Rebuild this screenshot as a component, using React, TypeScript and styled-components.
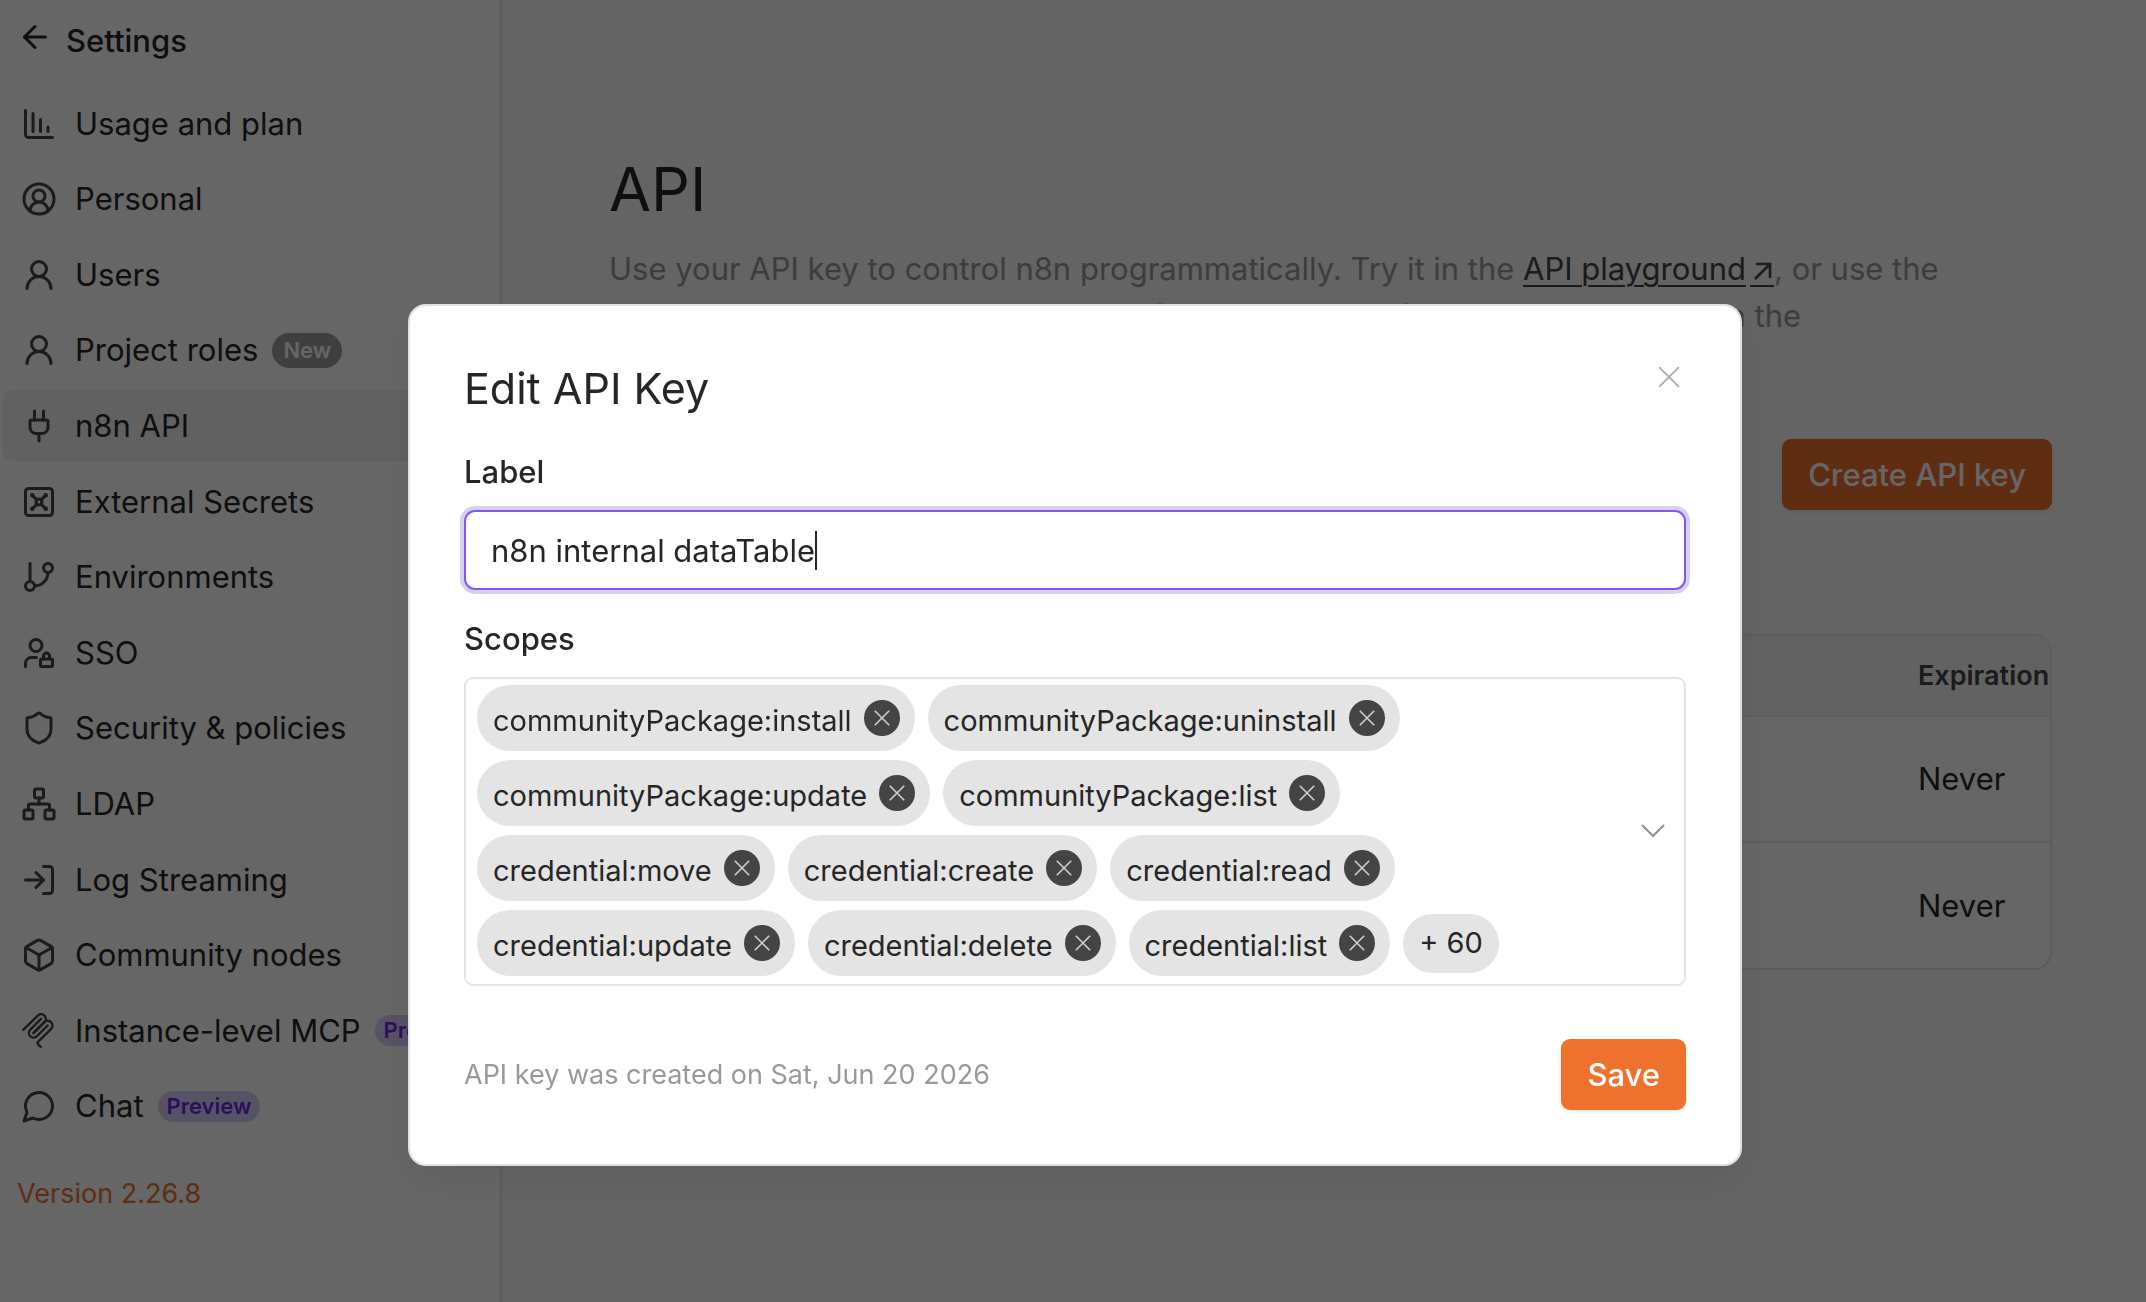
import React, { useLayoutEffect, useRef, useState } from 'react';
import styled, { createGlobalStyle, css } from 'styled-components';
import {
  ArrowLeft,
  Box,
  ChartColumnDecreasing,
  CircleUserRound,
  GitBranch,
  LogIn,
  Network,
  Plug,
  Shield,
  UserLock,
  UserRound,
  Vault,
} from 'lucide-react';

const GlobalStyle = createGlobalStyle`
  *, *::before, *::after { box-sizing: border-box; }
  body {
    margin: 0;
    font-family: Inter, "Liberation Sans", sans-serif;
    font-size: 31px;
    line-height: 40px;
    color: #262626;
    background: #fafafa;
  }
  button, input { font: inherit; color: inherit; }
`;

const Page = styled.div`
  display: flex;
  min-height: 100vh;
`;

const Sidebar = styled.aside`
  flex: none;
  width: 502px;
  min-height: 100vh;
  display: flex;
  flex-direction: column;
  padding-bottom: 88px;
  background: #fff;
  border-right: 2px solid #e3e3e3;
`;

const BackButton = styled.button`
  display: flex;
  gap: 13px;
  align-items: flex-start;
  margin: 0;
  padding: 19px 17px 25px;
  border: 0;
  background: none;
  font-weight: 500;
  line-height: 44px;
  text-align: left;
  cursor: pointer;
`;

const NavList = styled.ul`
  flex: 1;
  display: flex;
  flex-direction: column;
  justify-content: space-between;
  margin: 0;
  padding: 0 3px;
  list-style: none;
`;

const NavLink = styled.a<{ $active?: boolean }>`
  display: flex;
  align-items: center;
  height: 71px;
  padding: 0 18px;
  border-radius: 9px;
  color: inherit;
  text-decoration: none;
  white-space: nowrap;
  ${(p) => p.$active && css`background: #f3f3f3;`}
  svg { flex: none; margin-right: 18px; color: #444; }
`;

const Badge = styled.span<{ $tone: 'new' | 'preview' }>`
  margin-left: 14px;
  padding: 0 ${(p) => (p.$tone === 'new' ? 11 : 9)}px;
  border-radius: 18px;
  font-size: 22px;
  font-weight: 600;
  line-height: ${(p) => (p.$tone === 'new' ? 35 : 31)}px;
  color: ${(p) => (p.$tone === 'new' ? '#fff' : '#6f28e4')};
  background: ${(p) => (p.$tone === 'new' ? '#9d9d9d' : '#d8cffa')};
`;

const Version = styled.a`
  padding: 32px 17px 0;
  font-size: 27px;
  line-height: 40px;
  color: #ee722d;
  text-decoration: none;
`;

const Main = styled.main`
  flex: 1;
  min-width: 0;
  padding: 147px 94px 0 107px;
`;

const PageTitle = styled.h1`
  margin: 0;
  font-size: 61px;
  font-weight: 400;
  line-height: 84px;
`;

const Description = styled.p`
  margin: 14px 0 0;
  line-height: 47px;
  color: #999;
`;

const TextLink = styled.a`
  color: #444;
  white-space: nowrap;
  text-decoration: underline;
  text-decoration-thickness: 2px;
  text-underline-offset: 5px;
  svg { margin-left: 4px; vertical-align: -7px; border-bottom: 2px solid #444; }
`;

const Actions = styled.div`
  display: flex;
  justify-content: flex-end;
  margin-top: 53px;
`;

const PrimaryButton = styled.button`
  height: 71px;
  padding: 0 26px;
  border: 0;
  border-radius: 9px;
  font-weight: 500;
  color: #fff;
  background: #ee722d;
  box-shadow: 0 2px 4px rgba(0, 0, 0, 0.08);
  cursor: pointer;
`;

const TableFrame = styled.div`
  margin-top: 124px;
  border: 2px solid #e6e6e6;
  border-radius: 18px;
  overflow: hidden;
  background: #fff;
`;

const KeysTable = styled.table`
  width: 100%;
  border-collapse: collapse;
  table-layout: fixed;
  th, td { padding: 0 0 0 18px; text-align: left; white-space: nowrap; }
  th {
    height: 80px;
    font-size: 27px;
    font-weight: 600;
    color: #444;
    background: #f6f6f6;
    border-bottom: 1px solid #e6e6e6;
  }
  th:last-child { width: 150px; }
  td { height: 126px; }
  tbody tr + tr td { border-top: 2px solid #e6e6e6; }
`;

const Overlay = styled.div`
  position: fixed;
  inset: 0;
  display: flex;
  justify-content: center;
  align-items: flex-start;
  padding: 304px 0 0 4px;
  background: rgba(0, 0, 0, 0.6);
`;

const Modal = styled.section`
  width: 1334px;
  max-width: 100%;
  padding: 54px;
  border: 2px solid #e0e0e0;
  border-radius: 18px;
  background: #fff;
  box-shadow: 0 14px 40px rgba(0, 0, 0, 0.08);
`;

const ModalHeader = styled.header`
  display: flex;
  justify-content: space-between;
  align-items: flex-start;
`;

const ModalTitle = styled.h2`
  margin: 0;
  font-size: 43px;
  font-weight: 400;
  line-height: 56px;
`;

const CloseButton = styled.button`
  display: grid;
  place-items: center;
  width: 34px;
  height: 34px;
  padding: 0;
  border: 0;
  background: none;
  color: #adadad;
  cursor: pointer;
`;

const FieldLabel = styled.label<{ $gap: number }>`
  display: block;
  margin-top: ${(p) => p.$gap}px;
  font-weight: 500;
`;

const InputWrap = styled.div`
  position: relative;
  margin-top: 18px;
`;

const TextInput = styled.input`
  display: block;
  width: 100%;
  height: 80px;
  padding: 0 25px;
  border: 2px solid #8457f3;
  border-radius: 11px;
  outline: 0;
  box-shadow: 0 0 0 4px #d5d1ee;
  background: #fff;
  caret-color: transparent;
`;

const Caret = styled.span`
  position: absolute;
  top: 21px;
  width: 2px;
  height: 39px;
  background: #262626;
  pointer-events: none;
`;

const ScopeSelect = styled.div`
  display: flex;
  align-items: center;
  margin-top: 18px;
  padding: 6px 17px 8px 11px;
  border: 2px solid #e4e4e4;
  border-radius: 9px;
`;

const Chips = styled.ul`
  flex: 1;
  display: flex;
  flex-wrap: wrap;
  align-items: center;
  gap: 9px 13px;
  margin: 0;
  padding: 0 90px 0 0;
  list-style: none;
`;

const Chip = styled.li`
  display: flex;
  align-items: center;
  gap: 12px;
  height: 66px;
  padding: 0 15px 0 16px;
  border-radius: 33px;
  font-size: 29px;
  background: #e4e4e4;
  span { padding-top: 6px; }
`;

const MoreChip = styled(Chip)`
  height: 59px;
  padding: 0 16px;
`;

const RemoveButton = styled.button`
  display: grid;
  place-items: center;
  width: 36px;
  height: 36px;
  padding: 0;
  border: 0;
  border-radius: 50%;
  background: #444;
  color: #d0d0d0;
  cursor: pointer;
`;

const ToggleButton = styled(CloseButton)`
  width: 28px;
  color: #8f8f8f;
`;

const ModalFooter = styled.footer`
  display: flex;
  justify-content: space-between;
  align-items: center;
  margin-top: 53px;
`;

const CreatedNote = styled.span`
  font-size: 27px;
  color: #999;
`;

const McpIcon = () => (
  <svg width="36" height="36" viewBox="0 0 24 24" fill="none" stroke="currentColor" strokeWidth="1.6" strokeLinecap="round" strokeLinejoin="round">
    <path d="M1.5 11.3 11.2 1.7a3.1 3.1 0 0 1 4.4 4.4L8.3 13.4" />
    <path d="m8.4 13.3 7.2-7.2a3.1 3.1 0 0 1 4.4 0l.1.1a3.1 3.1 0 0 1 0 4.4l-8.8 8.7a1 1 0 0 0 0 1.5l1.8 1.8" />
    <path d="m13.4 3.9-7.2 7.2a3.1 3.1 0 0 0 4.4 4.4l7.2-7.2" />
  </svg>
);

const ChatIcon = () => (
  <svg width="36" height="36" viewBox="0 0 24 24" fill="none" stroke="currentColor" strokeWidth="2" strokeLinecap="round" strokeLinejoin="round">
    <path d="M7.9 20A9 9 0 1 0 4 16.1L2 22Z" />
  </svg>
);

const ExternalArrow = () => (
  <svg width="24" height="28" viewBox="0 0 24 26" fill="none" stroke="currentColor" strokeWidth="2.6">
    <path d="M5 20 20 5M6 5h14v14" />
  </svg>
);

const Cross = ({ size }: { size: number }) => (
  <svg width={size} height={size} viewBox="0 0 20 20" fill="none" stroke="currentColor" strokeWidth={size > 20 ? 1.7 : 2}>
    <path d="m1 1 18 18M19 1 1 19" />
  </svg>
);

const LabelInput = ({ id, initial }: { id: string; initial: string }) => {
  const input = useRef<HTMLInputElement>(null);
  const [value, setValue] = useState(initial);
  const [caretLeft, setCaretLeft] = useState(0);

  useLayoutEffect(() => {
    const context = document.createElement('canvas').getContext('2d');
    if (!input.current || !context) return;
    const style = getComputedStyle(input.current);
    context.font = `${style.fontWeight} ${style.fontSize} ${style.fontFamily}`;
    const start = parseFloat(style.paddingLeft) + parseFloat(style.borderLeftWidth);
    setCaretLeft(Math.round(start + context.measureText(value).width));
  }, [value]);

  return (
    <InputWrap>
      <TextInput id={id} ref={input} type="text" value={value} onChange={(e) => setValue(e.target.value)} autoFocus />
      <Caret style={{ left: caretLeft }} />
    </InputWrap>
  );
};

const navItems = [
  { label: 'Usage and plan', icon: <ChartColumnDecreasing size={36} /> },
  { label: 'Personal', icon: <CircleUserRound size={36} /> },
  { label: 'Users', icon: <UserRound size={36} /> },
  { label: 'Project roles', icon: <UserRound size={36} />, badge: 'New' },
  { label: 'n8n API', icon: <Plug size={36} />, active: true },
  { label: 'External Secrets', icon: <Vault size={36} /> },
  { label: 'Environments', icon: <GitBranch size={36} /> },
  { label: 'SSO', icon: <UserLock size={36} /> },
  { label: 'Security & policies', icon: <Shield size={36} /> },
  { label: 'LDAP', icon: <Network size={36} /> },
  { label: 'Log Streaming', icon: <LogIn size={36} /> },
  { label: 'Community nodes', icon: <Box size={36} /> },
  { label: 'Instance-level MCP', icon: <McpIcon />, badge: 'Preview' },
  { label: 'Chat', icon: <ChatIcon />, badge: 'Preview' },
];

const scopes = [
  'communityPackage:install',
  'communityPackage:uninstall',
  'communityPackage:update',
  'communityPackage:list',
  'credential:move',
  'credential:create',
  'credential:read',
  'credential:update',
  'credential:delete',
  'credential:list',
];

export default function App() {
  return (
    <>
      <GlobalStyle />
      <Page>
        <Sidebar>
          <BackButton type="button">
            <ArrowLeft size={36} />
            <span>Settings</span>
          </BackButton>
          <NavList>
            {navItems.map((item) => (
              <li key={item.label}>
                <NavLink href="#" $active={item.active}>
                  {item.icon}
                  {item.label}
                  {item.badge && <Badge $tone={item.badge === 'New' ? 'new' : 'preview'}>{item.badge}</Badge>}
                </NavLink>
              </li>
            ))}
          </NavList>
          <Version href="#">Version 2.26.8</Version>
        </Sidebar>
        <Main>
          <PageTitle>API</PageTitle>
          <Description>
            Use your API key to control n8n programmatically. Try it in the{' '}
            <TextLink href="#">API playground<ExternalArrow /></TextLink>, or use the{' '}
            <TextLink href="#">n8n node</TextLink> to manage your instances, from a new workflow. More on scopes in the{' '}
            <TextLink href="#">API documentation</TextLink>
          </Description>
          <Actions>
            <PrimaryButton type="button">Create API key</PrimaryButton>
          </Actions>
          <TableFrame>
            <KeysTable>
              <thead>
                <tr><th>Label</th><th>Key</th><th>Expiration</th></tr>
              </thead>
              <tbody>
                <tr><td /><td /><td>Never</td></tr>
                <tr><td /><td /><td>Never</td></tr>
              </tbody>
            </KeysTable>
          </TableFrame>
        </Main>
      </Page>
      <Overlay>
        <Modal role="dialog" aria-modal="true" aria-labelledby="edit-key-title">
          <ModalHeader>
            <ModalTitle id="edit-key-title">Edit API Key</ModalTitle>
            <CloseButton type="button" aria-label="Close"><Cross size={22} /></CloseButton>
          </ModalHeader>
          <FieldLabel htmlFor="key-label" $gap={36}>Label</FieldLabel>
          <LabelInput id="key-label" initial="n8n internal dataTable" />
          <FieldLabel as="div" id="scopes-label" $gap={29}>Scopes</FieldLabel>
          <ScopeSelect role="group" aria-labelledby="scopes-label">
            <Chips>
              {scopes.map((scope) => (
                <Chip key={scope}>
                  <span>{scope}</span>
                  <RemoveButton type="button" aria-label={`Remove ${scope}`}><Cross size={16} /></RemoveButton>
                </Chip>
              ))}
              <MoreChip>+ 60</MoreChip>
            </Chips>
            <ToggleButton type="button" aria-label="Show scopes">
              <svg width="24" height="14" viewBox="0 0 24 14" fill="none" stroke="currentColor" strokeWidth="2">
                <path d="m1 1 11 11L23 1" />
              </svg>
            </ToggleButton>
          </ScopeSelect>
          <ModalFooter>
            <CreatedNote>API key was created on Sat, Jun 20 2026</CreatedNote>
            <PrimaryButton type="button">Save</PrimaryButton>
          </ModalFooter>
        </Modal>
      </Overlay>
    </>
  );
}
